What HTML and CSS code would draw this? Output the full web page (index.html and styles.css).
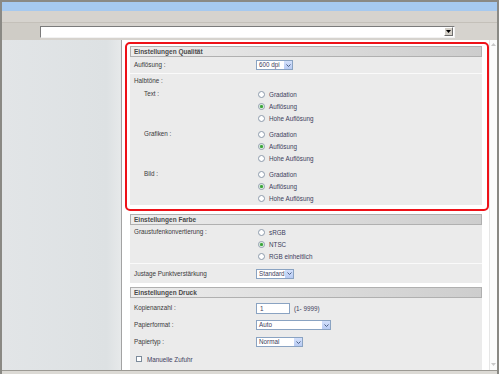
FILE: index.html
```html
<!DOCTYPE html>
<html lang="de">
<head>
  <meta charset="UTF-8" />
  <meta name="viewport" content="width=device-width, initial-scale=1.0" />
  <title>Einstellungen</title>
  <link rel="stylesheet" href="styles.css">
</head>
<body>

  <div class="window">
    <div class="titlebar"></div>
    <div class="toolbar"></div>

    <div class="addressbar">
      <div class="address-label"></div>
      <div class="address-field">
        <span class="address-drop">
          <svg width="5" height="3" viewBox="0 0 5 3"><polygon points="0,0 5,0 2.5,3" fill="#000"/></svg>
        </span>
      </div>
    </div>

    <div class="content">
      <div class="sidebar"></div>

      <div class="main">

        <!-- Rahmen um den ersten Abschnitt -->
        <div class="highlight">
          <div class="section">
            <div class="section-head">Einstellungen Qualität</div>

            <div class="row row-sep row-first">
              <div class="label">Auflösung :</div>
              <div class="value">
                <span class="select sel-dpi"><span class="select-text">600 dpi</span><span class="select-btn"><svg width="5" height="3" viewBox="0 0 5 3"><polyline points="0.5,0.5 2.5,2.5 4.5,0.5" fill="none" stroke="#4d6185" stroke-width="1"/></svg></span></span>
              </div>
            </div>

            <div class="row row-title">
              <div class="label">Halbtöne :</div>
            </div>

            <div class="group">
              <div class="label sub">Text :</div>
              <div class="radios">
                <div class="radio"><span class="dot"></span>Gradation</div>
                <div class="radio"><span class="dot checked"></span>Auflösung</div>
                <div class="radio"><span class="dot"></span>Hohe Auflösung</div>
              </div>
            </div>

            <div class="group">
              <div class="label sub">Grafiken :</div>
              <div class="radios">
                <div class="radio"><span class="dot"></span>Gradation</div>
                <div class="radio"><span class="dot checked"></span>Auflösung</div>
                <div class="radio"><span class="dot"></span>Hohe Auflösung</div>
              </div>
            </div>

            <div class="group group-last">
              <div class="label sub">Bild :</div>
              <div class="radios">
                <div class="radio"><span class="dot"></span>Gradation</div>
                <div class="radio"><span class="dot checked"></span>Auflösung</div>
                <div class="radio"><span class="dot"></span>Hohe Auflösung</div>
              </div>
            </div>
          </div>
        </div>

        <div class="section">
          <div class="section-head">Einstellungen Farbe</div>

          <div class="group group-sep">
            <div class="label">Graustufenkonvertierung :</div>
            <div class="radios">
              <div class="radio"><span class="dot"></span>sRGB</div>
              <div class="radio"><span class="dot checked"></span>NTSC</div>
              <div class="radio"><span class="dot"></span>RGB einheitlich</div>
            </div>
          </div>

          <div class="row row-tall">
            <div class="label">Justage Punktverstärkung</div>
            <div class="value">
              <span class="select sel-std"><span class="select-text">Standard</span><span class="select-btn"><svg width="5" height="3" viewBox="0 0 5 3"><polyline points="0.5,0.5 2.5,2.5 4.5,0.5" fill="none" stroke="#4d6185" stroke-width="1"/></svg></span></span>
            </div>
          </div>
        </div>

        <div class="section section-print">
          <div class="section-head">Einstellungen Druck</div>

          <div class="row">
            <div class="label">Kopienanzahl :</div>
            <div class="value">
              <span class="textbox">1</span>
              <span class="hint">(1- 9999)</span>
            </div>
          </div>

          <div class="row">
            <div class="label">Papierformat :</div>
            <div class="value">
              <span class="select sel-auto"><span class="select-text">Auto</span><span class="select-btn"><svg width="5" height="3" viewBox="0 0 5 3"><polyline points="0.5,0.5 2.5,2.5 4.5,0.5" fill="none" stroke="#4d6185" stroke-width="1"/></svg></span></span>
            </div>
          </div>

          <div class="row">
            <div class="label">Papiertyp :</div>
            <div class="value">
              <span class="select sel-normal"><span class="select-text">Normal</span><span class="select-btn"><svg width="5" height="3" viewBox="0 0 5 3"><polyline points="0.5,0.5 2.5,2.5 4.5,0.5" fill="none" stroke="#4d6185" stroke-width="1"/></svg></span></span>
            </div>
          </div>

          <div class="check-row">
            <span class="checkbox"></span>Manuelle Zufuhr
          </div>
        </div>

      </div>

      <div class="scroll">
        <svg width="5" height="3" viewBox="0 0 5 3"><polygon points="0,3 5,3 2.5,0" fill="#c8c8c8"/></svg>
        <svg width="5" height="3" viewBox="0 0 5 3"><polygon points="0,0 5,0 2.5,3" fill="#c8c8c8"/></svg>
      </div>
    </div>

    <div class="statusbar"></div>
  </div>

</body>
</html>
```

FILE: styles.css
```css
/* Global Styles */
* {
  box-sizing: border-box;
  margin: 0;
  padding: 0;
}
body {
  font-family: "Liberation Sans", Arial, sans-serif;
  font-size: 6.3px;
  color: #3a3a3a;
  background: #fff;
}

/* Fensterrahmen */
.window {
  width: 499px;
  height: 374px;
  border: 2px solid #8a8984;
  border-bottom: 0;
  display: flex;
  flex-direction: column;
  overflow: hidden;
}
.titlebar {
  height: 9px;
  background: #a6c9ef;
}
.toolbar {
  height: 12px;
  background: #d6d3ce;
  border-bottom: 1px solid #c4c0b9;
}
.addressbar {
  height: 17px;
  display: flex;
  align-items: center;
  background: #d6d3ce;
}
.address-label {
  width: 38px;
  height: 100%;
  background: #cfccc6;
}
.address-field {
  width: 415px;
  height: 12px;
  background: #fff;
  border: 1px solid;
  border-color: #7b7b7b #f2f2f2 #f2f2f2 #7b7b7b;
  display: flex;
  justify-content: flex-end;
  align-items: center;
  padding-right: 1px;
}
.address-drop {
  width: 9px;
  height: 9px;
  background: #d4d0c8;
  border: 1px solid;
  border-color: #fff #6f6f6f #6f6f6f #fff;
  display: flex;
  justify-content: center;
  align-items: center;
}

/* Inhalt */
.content {
  height: 330px;
  display: flex;
}
.sidebar {
  width: 120px;
  background: linear-gradient(to right, #e2e5e7 0%, #dde1e3 88%, #e7e9ea 100%);
  border-right: 1px solid #a3a3a3;
}
.main {
  flex: 1;
  padding: 2px 7px 0 8px;
  overflow: hidden;
}
.scroll {
  width: 8px;
  background: #fcfcfc;
  border-left: 1px solid #e6e6e6;
  display: flex;
  flex-direction: column;
  justify-content: space-between;
  align-items: center;
  padding: 3px 0 4px;
}
.statusbar {
  height: 4px;
  border-top: 1px solid #9c9a94;
  background: #dcdad5;
}

/* roter Rahmen */
.highlight {
  border: 2px solid #ee1118;
  border-radius: 5px;
  margin: 0 -7px 3px -5px;
  padding: 2px 5px 4px 3px;
}

/* Abschnitte */
.section {
  background: #ebebeb;
  margin-bottom: 4px;
}
.highlight .section {
  margin-bottom: 0;
}
.section-head {
  height: 11px;
  line-height: 9px;
  padding-left: 3px;
  border: 1px solid #b0b0b0;
  background: linear-gradient(to right, #ededed, #cdcdcd);
  font-size: 6.5px;
  font-weight: bold;
  color: #4a4a4a;
}
.row {
  display: grid;
  grid-template-columns: 126px 1fr;
  align-items: center;
  height: 16px;
}
.row-first {
  height: 17px;
}
.row-sep,
.group-sep {
  border-bottom: 1px solid #fafafa;
}
.row-title {
  height: 14px;
}
.row-tall {
  height: 19px;
}
.label {
  padding-left: 4px;
  line-height: 12px;
  white-space: nowrap;
}
.label.sub {
  padding-left: 14px;
}
.value {
  display: flex;
  align-items: center;
  gap: 4px;
}
.group {
  display: grid;
  grid-template-columns: 126px 1fr;
  align-items: start;
  margin-bottom: 4px;
}
.group-last {
  margin-bottom: 0;
  padding-bottom: 1px;
}
.group-sep {
  margin-bottom: 0;
  padding: 1px 0 1px;
}
.radios {
  display: flex;
  flex-direction: column;
}
.radio {
  height: 12px;
  display: flex;
  align-items: center;
  gap: 4px;
  padding-left: 2px;
  color: #3d3d5c;
}
.dot {
  width: 7px;
  height: 7px;
  border-radius: 50%;
  border: 1px solid #8c9aab;
  background: #fff;
  display: flex;
  justify-content: center;
  align-items: center;
}
.dot.checked::after {
  content: "";
  width: 3px;
  height: 3px;
  border-radius: 50%;
  background: #3aa23a;
  box-shadow: 0 0 0 0.5px #9fd69f;
}

/* Auswahlfelder */
.select {
  height: 10px;
  display: inline-flex;
  border: 1px solid #8aa3c2;
  background: #fff;
  color: #3d3d5c;
}
.select-text {
  flex: 1;
  padding-left: 2px;
  line-height: 8px;
}
.select-btn {
  width: 8px;
  background: linear-gradient(#d3e0fb, #b8cbf3);
  display: flex;
  justify-content: center;
  align-items: center;
}
.sel-dpi { width: 37px; }
.sel-std { width: 38px; }
.sel-auto { width: 75px; }
.sel-normal { width: 47px; }

.textbox {
  width: 34px;
  height: 11px;
  border: 1px solid #8aa3c2;
  background: #fff;
  padding-left: 3px;
  line-height: 9px;
  color: #3d3d5c;
}
.hint {
  color: #3d3d5c;
}

.section-print {
  padding-bottom: 10px;
}
.section-print .section-head {
  margin-bottom: 2px;
}
.section-print .row {
  margin-bottom: 1px;
}
.check-row {
  height: 16px;
  display: flex;
  align-items: center;
  gap: 5px;
  padding-left: 6px;
  color: #3d3d5c;
}
.checkbox {
  width: 6px;
  height: 6px;
  border: 1px solid #7c8b9b;
  background: #fff;
}
```
